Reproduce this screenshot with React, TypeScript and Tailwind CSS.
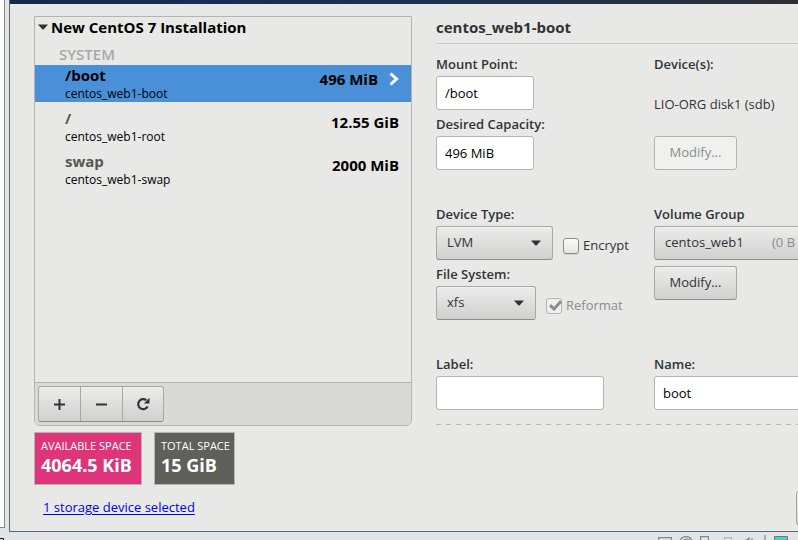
import React, { useId, type ReactNode } from "react";

const BUTTON =
  "h-[34px] rounded-[3px] border border-[#a8a8a5] border-b-[#8b8d88] bg-linear-to-b from-[#ececea] to-[#d0d0ce] text-[#2e3436] shadow-[inset_0_1px_#f2f2f1]";
const INPUT = "h-[34px] rounded-[3px] border border-[#b4b5b1] bg-white px-2 text-black outline-none";

function TextField({ label, value, width }: { label: string; value: string; width: string }) {
  const id = useId();
  return (
    <div className="flex flex-col gap-0.5">
      <label htmlFor={id} className="h-5 leading-5 font-semibold">{label}</label>
      <input id={id} defaultValue={value} className={`${INPUT} ${width}`} />
    </div>
  );
}

function SelectField({ label, value, width, note, children }: {
  label: string; value: string; width: string; note?: string; children?: ReactNode;
}) {
  const id = useId();
  return (
    <div className="flex flex-col gap-0.5">
      <label htmlFor={id} className="h-5 leading-5 font-semibold">{label}</label>
      <div className="flex gap-2.5">
        <div className={`relative shrink-0 ${width}`}>
          <select id={id} className={`${BUTTON} w-full appearance-none px-2.5 outline-none`}>
            <option>{value}</option>
          </select>
          {note ? (
            <span className="pointer-events-none absolute top-1.5 left-[118px] leading-5 whitespace-nowrap text-[#8b8e8f]">{note}</span>
          ) : (
            <svg className="pointer-events-none absolute top-[14px] right-3 h-[6px] w-[10px]" viewBox="0 0 10 6" aria-hidden="true">
              <path d="M0 .5h10L6 5Q5 6 4 5Z" fill="#2e3436" />
            </svg>
          )}
        </div>
        {children}
      </div>
    </div>
  );
}

function CheckField({ label, checked, disabled }: { label: string; checked?: boolean; disabled?: boolean }) {
  return (
    <label className={`relative flex h-[34px] items-center gap-1 pt-1.5 ${disabled ? "text-[#8b8e8f]" : ""}`}>
      <input
        type="checkbox"
        defaultChecked={checked}
        disabled={disabled}
        className={`size-4 appearance-none rounded-[3px] border ${disabled ? "border-[#b4b5b1] bg-[#efefee]" : "border-[#8b8d88] bg-linear-to-b from-[#fbfbfb] to-[#e4e4e2] shadow-[0_1px_#d0d0ce]"}`}
      />
      {checked && (
        <svg className="pointer-events-none absolute top-[14px] left-[3px] h-[11px] w-[13px]" viewBox="0 0 13 11" aria-hidden="true">
          <path d="M1 5.2L5 9L12 1.2" fill="none" stroke="#8b8e8f" strokeWidth="3" />
        </svg>
      )}
      {label}
    </label>
  );
}

const VOLUMES = [
  { mount: "/boot", device: "centos_web1-boot", size: "496 MiB", selected: true },
  { mount: "/", device: "centos_web1-root", size: "12.55 GiB", selected: false },
  { mount: "swap", device: "centos_web1-swap", size: "2000 MiB", selected: false },
];

function VolumeList() {
  return (
    <section className="flex min-h-0 flex-1 flex-col overflow-hidden rounded-b-[6px] border border-[#b4b5b1]">
      <h2 className="flex h-5 items-center gap-[3px] pl-[3px] text-[15px] font-bold text-black">
        <svg className="h-[6px] w-[10px]" viewBox="0 0 10 6" aria-hidden="true">
          <path d="M0 .5h10L6 5Q5 6 4 5Z" fill="#2e3436" />
        </svg>
        New CentOS 7 Installation
      </h2>
      <h3 className="mt-[7px] h-[21px] pl-6 text-[15px] leading-[21px] font-semibold text-[#a7a8a7]">SYSTEM</h3>
      <ul className="flex flex-col gap-1.5">
        {VOLUMES.map((v) => (
          <li key={v.mount} className={`flex h-[37px] items-center justify-between pr-3 pl-[30px] text-black ${v.selected ? "bg-[#4a90d9]" : ""}`}>
            <div className="flex flex-col">
              <span className={`h-5 text-[15px] leading-[18px] font-bold ${v.selected ? "text-black" : "text-[#555755]"}`}>{v.mount}</span>
              <span className="h-4 text-[12px] leading-4">{v.device}</span>
            </div>
            <div className="flex items-center gap-[11px] pb-2.5 text-[15px] leading-5 font-bold">
              {v.size}
              {v.selected && (
                <svg className="h-[14px] w-[10px]" viewBox="0 0 10 14" aria-hidden="true">
                  <path d="M1.5 1.5L7.5 7L1.5 12.5" fill="none" stroke="#fff" strokeWidth="3" />
                </svg>
              )}
            </div>
          </li>
        ))}
      </ul>
      <div className="mt-auto flex h-[43px] shrink-0 border-t border-[#b4b5b1] bg-[#d9d9d7] p-[3px]">
        <div className="flex h-[36px] divide-x divide-[#a8a8a5] rounded-[3px] border border-[#a8a8a5] border-b-[#8b8d88] bg-linear-to-b from-[#ececea] to-[#d0d0ce]">
          <button aria-label="Add" className="flex w-[42px] items-center justify-center">
            <svg className="size-[11px]" viewBox="0 0 11 11" aria-hidden="true"><path d="M5.5 0v11M0 5.5h11" stroke="#2e3436" strokeWidth="2" /></svg>
          </button>
          <button aria-label="Remove" className="flex w-[42px] items-center justify-center">
            <svg className="size-[11px]" viewBox="0 0 11 11" aria-hidden="true"><path d="M0 5.5h11" stroke="#2e3436" strokeWidth="2" /></svg>
          </button>
          <button aria-label="Reload" className="flex w-[40px] items-center justify-center">
            <svg className="size-[14px]" viewBox="0 0 14 14" aria-hidden="true">
              <path d="M11.6 9.5A5 5 0 1 1 10.3 3.2" fill="none" stroke="#2e3436" strokeWidth="2.2" />
              <path d="M13.5 .8V6.5H7.8Z" fill="#2e3436" />
            </svg>
          </button>
        </div>
      </div>
    </section>
  );
}

function Space({ title, value, color }: { title: string; value: string; color: string }) {
  return (
    <div className={`flex h-[53px] flex-col border border-[#b4b5b1] pt-[5px] pr-1 pl-1.5 text-white ${color}`}>
      <span className="text-[11px] leading-4">{title}</span>
      <span className="text-[18px] leading-[22px] font-bold">{value}</span>
    </div>
  );
}

function Details() {
  return (
    <section className="min-w-[400px] flex-1">
      <h1 className="h-7 border-b border-[#cbccc9] text-[15px] leading-[22px] font-bold">centos_web1-boot</h1>
      <div className="mt-2.5 grid grid-cols-[218px_1fr] gap-y-[34px]">
        <div className="flex flex-col gap-1">
          <TextField label="Mount Point:" value="/boot" width="w-[98px]" />
          <TextField label="Desired Capacity:" value="496 MiB" width="w-[98px]" />
        </div>
        <div className="flex flex-col items-start justify-between">
          <h2 className="h-5 leading-5 font-semibold">Device(s):</h2>
          <p className="pb-0.5 leading-5">LIO-ORG disk1 (sdb)</p>
          <button disabled className="h-[34px] w-[83px] rounded-[3px] border border-[#b4b5b1] bg-[#f0f0ef] text-[#8b8e8f]">Modify...</button>
        </div>
        <div className="flex flex-col gap-1">
          <SelectField label="Device Type:" value="LVM" width="w-[117px]">
            <CheckField label="Encrypt" />
          </SelectField>
          <SelectField label="File System:" value="xfs" width="w-[100px]">
            <CheckField label="Reformat" checked disabled />
          </SelectField>
        </div>
        <div className="flex flex-col items-start gap-1.5">
          <SelectField label="Volume Group" value="centos_web1" width="w-[220px]" note="(0 B" />
          <button className={`${BUTTON} w-[83px]`}>Modify...</button>
        </div>
        <TextField label="Label:" value="" width="w-[168px]" />
        <TextField label="Name:" value="boot" width="w-[168px]" />
      </div>
      <div className="mt-[14px] h-px bg-[repeating-linear-gradient(90deg,#b9bab7_0_5px,transparent_5px_10px)]" />
    </section>
  );
}

export default function App() {
  return (
    <div className="flex h-screen flex-col overflow-hidden bg-[#e2e4e7] font-['Open_Sans','Noto_Sans',sans-serif] text-[13px] text-[#2e3436]">
      <div className="flex min-h-0 flex-1">
        <div className="mb-1 w-[5px] shrink-0 border-r border-b border-[#85878c] bg-white" />
        <main className="ml-1 flex min-w-0 flex-1 flex-col overflow-hidden border-b border-l border-[#646568] bg-[#e8e8e6]">
          <div className="h-1 shrink-0 bg-linear-to-r from-[#14284c] via-[#1b3154] to-[#2b2d31]" />
          <div className="flex min-h-0 flex-1 gap-6 pt-3 pl-6">
            <div className="flex w-[378px] shrink-0 flex-col">
              <VolumeList />
              <div className="mt-1.5 grid grid-cols-[108px_81px] gap-3">
                <Space title="AVAILABLE SPACE" value="4064.5 KiB" color="bg-[#dd347a]" />
                <Space title="TOTAL SPACE" value="15 GiB" color="bg-[#5e6059]" />
              </div>
            </div>
            <Details />
          </div>
          <footer className="flex h-[46px] shrink-0 items-start justify-between pt-1.5 pl-[33px]">
            <a href="#devices" className="mt-1.5 leading-5 text-[#0000ee] underline underline-offset-2">1 storage device selected</a>
            <button aria-label="Close" className={`${BUTTON} -mr-[78px] w-20 shrink-0`} />
          </footer>
        </main>
      </div>
      <div className="flex h-2 shrink-0 items-end justify-between">
        <svg className="h-2 w-1" viewBox="0 0 4 8" aria-hidden="true"><path d="M0 6.5h3.5V8" fill="none" stroke="#111" /></svg>
        <svg className="h-2 w-[144px]" viewBox="0 0 144 8" aria-hidden="true">
          <g fill="none" stroke="#858789" strokeWidth="1.2">
            <path d="M4.6 8V5.6h12.8V8M26 8q2-3.4 6-3.4t6 3.4M29 8l4-1 3 1M46.6 8V4.6h7.8V8" />
            <path d="M70.6 8V5.6h6.8V8" stroke="#b7b8bb" />
            <path d="M92 8l3-2v2M98 8V6" />
            <path d="M111 3v5" />
          </g>
          <path d="M120.5 8V4.5h13V8" fill="#3ad9c2" stroke="#777" />
        </svg>
      </div>
    </div>
  );
}
